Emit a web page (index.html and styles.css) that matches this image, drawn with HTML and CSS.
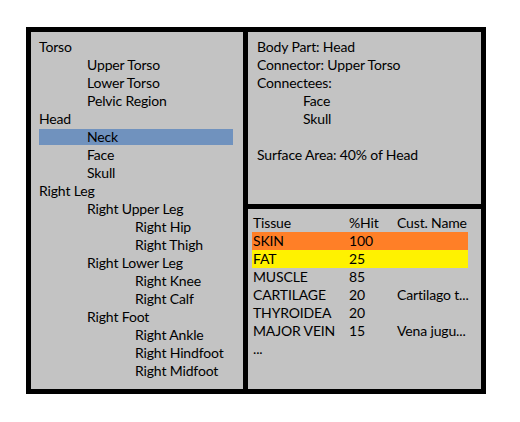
FILE: index.html
```html
<!DOCTYPE html>
<html>
<head>
<meta charset="utf-8">
<link rel="stylesheet" href="styles.css">
</head>
<body>
<div class="frame">
  <div class="tree">
    <div class="item l0">Torso</div>
    <div class="item l1">Upper Torso</div>
    <div class="item l1">Lower Torso</div>
    <div class="item l1">Pelvic Region</div>
    <div class="item l0">Head</div>
    <div class="item l1 sel">Neck</div>
    <div class="item l1">Face</div>
    <div class="item l1">Skull</div>
    <div class="item l0">Right Leg</div>
    <div class="item l1">Right Upper Leg</div>
    <div class="item l2">Right Hip</div>
    <div class="item l2">Right Thigh</div>
    <div class="item l1">Right Lower Leg</div>
    <div class="item l2">Right Knee</div>
    <div class="item l2">Right Calf</div>
    <div class="item l1">Right Foot</div>
    <div class="item l2">Right Ankle</div>
    <div class="item l2">Right Hindfoot</div>
    <div class="item l2">Right Midfoot</div>
  </div>
  <div class="side">
    <div class="info">
      <div class="line">Body Part: Head</div>
      <div class="line">Connector: Upper Torso</div>
      <div class="line">Connectees:</div>
      <div class="line ind">Face</div>
      <div class="line ind">Skull</div>
      <div class="line"></div>
      <div class="line">Surface Area: 40% of Head</div>
    </div>
    <div class="tissues">
      <div class="row"><span>Tissue</span><span>%Hit</span><span>Cust. Name</span></div>
      <div class="row orange"><span>SKIN</span><span>100</span><span></span></div>
      <div class="row yellow"><span>FAT</span><span>25</span><span></span></div>
      <div class="row"><span>MUSCLE</span><span>85</span><span></span></div>
      <div class="row"><span>CARTILAGE</span><span>20</span><span>Cartilago t...</span></div>
      <div class="row"><span>THYROIDEA</span><span>20</span><span></span></div>
      <div class="row"><span>MAJOR VEIN</span><span>15</span><span>Vena jugu...</span></div>
      <div class="row"><span>...</span><span></span><span></span></div>
    </div>
  </div>
</div>
</body>
</html>
```
FILE: styles.css
```css
html, body {
  margin: 0;
  padding: 0;
  background: #ffffff;
}
body {
  font-family: Lato, "Open Sans", sans-serif;
  font-size: 14px;
  letter-spacing: -0.15px;
  color: #000000;
}
.frame {
  margin: 27px 0 0 26px;
  width: 450px;
  height: 357px;
  border: 5px solid #000;
  display: flex;
  background: #c3c3c3;
}
.tree {
  width: 194px;
  border-right: 5px solid #000;
  padding: 7px 10px 0 8px;
  display: flex;
  flex-direction: column;
  gap: 2px;
}
.item {
  height: 16px;
  line-height: 16px;
  white-space: nowrap;
}
.l0 { padding-left: 0; }
.l1 { padding-left: 48px; }
.l2 { padding-left: 96px; }
.sel { background: #7092be; }
.side {
  width: 233px;
  display: flex;
  flex-direction: column;
}
.info {
  height: 165px;
  padding: 7px 0 0 9px;
  border-bottom: 5px solid #000;
  display: flex;
  flex-direction: column;
  gap: 2px;
}
.line {
  height: 16px;
  line-height: 16px;
  white-space: nowrap;
}
.ind { padding-left: 46px; }
.tissues {
  flex: 1;
  padding: 5px 0 0 4px;
}
.row {
  width: 216px;
  height: 18px;
  line-height: 18px;
  display: grid;
  grid-template-columns: 97px 48px 71px;
  white-space: nowrap;
}
.row span:first-child { padding-left: 1px; }
.orange { background: #ff7f27; }
.yellow { background: #fff200; }
```
